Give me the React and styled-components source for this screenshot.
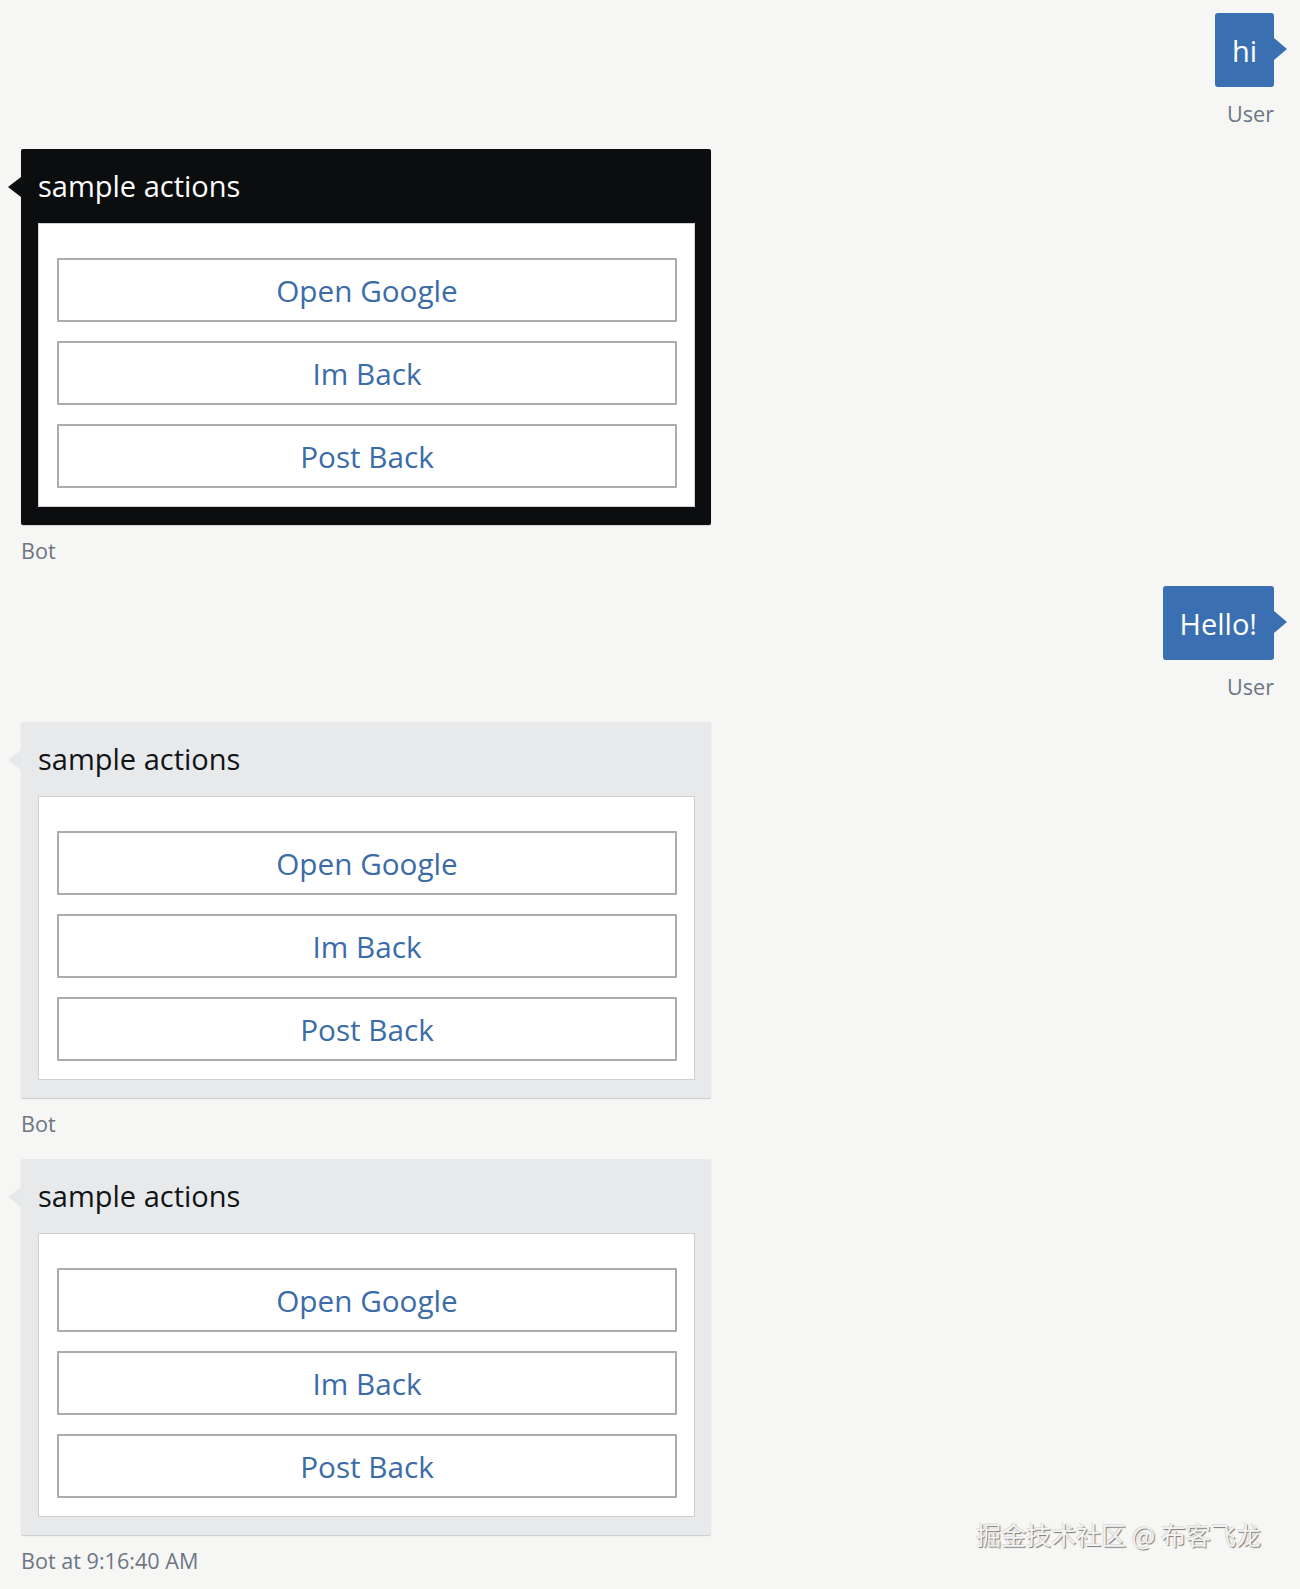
import styled, { createGlobalStyle } from "styled-components";

const GlobalStyle = createGlobalStyle`
  html, body {
    margin: 0;
    padding: 0;
    background: #f6f6f4;
  }
  * {
    box-sizing: border-box;
  }
`;

const Chat = styled.div`
  position: relative;
  min-height: 100vh;
  padding: 13px 26px 17px 21px;
  display: flex;
  flex-direction: column;
  gap: 21px;
  font-family: "Open Sans", "Noto Sans", sans-serif;
`;

const Group = styled.div`
  display: flex;
  flex-direction: column;
  align-items: ${(p) => (p.$from === "user" ? "flex-end" : "flex-start")};
`;

const Bubble = styled.div`
  position: relative;
  height: 74px;
  padding: 0 17px;
  display: flex;
  align-items: center;
  background: #3a70b2;
  color: #fff;
  font-size: 29px;
  border-radius: 3px;

  &::after {
    content: "";
    position: absolute;
    right: -13px;
    top: 25px;
    border-left: 13px solid #3a70b2;
    border-top: 11px solid transparent;
    border-bottom: 11px solid transparent;
  }
`;

const Sender = styled.div`
  margin-top: ${(p) => (p.$from === "user" ? "13px" : "12px")};
  font-size: 21.6px;
  line-height: 28px;
  color: #6d7683;
`;

const Card = styled.div`
  position: relative;
  width: 690px;
  padding: 17px 16px 18px 17px;
  background: ${(p) => (p.$dark ? "#0b0d0e" : "#e8e9eb")};
  border-radius: 2px;
  box-shadow: 0 1px 1px ${(p) => (p.$dark ? "#d6d6d6" : "#c9cbcd")};

  &::before {
    content: "";
    position: absolute;
    left: -13px;
    top: 28px;
    border-right: 13px solid ${(p) => (p.$dark ? "#0b0d0e" : "#e6e8ea")};
    border-top: 10px solid transparent;
    border-bottom: 10px solid transparent;
  }
`;

const Title = styled.div`
  margin-bottom: 17px;
  font-size: 29px;
  line-height: 40px;
  color: ${(p) => (p.$dark ? "#ffffff" : "#111416")};
`;

const Actions = styled.div`
  display: flex;
  flex-direction: column;
  gap: 19px;
  padding: 34px 17px 18px 18px;
  background: #fff;
  border: 1px solid #cfd0d2;
`;

const ActionButton = styled.button`
  height: 64px;
  background: #fff;
  border: 2px solid #acacac;
  border-radius: 1px;
  color: #3b6ca8;
  font-family: "Open Sans", "Noto Sans", sans-serif;
  font-size: 29.7px;
  cursor: pointer;

  &:hover {
    border-color: #3b6ca8;
  }
`;

const Watermark = styled.div`
  position: absolute;
  right: 39px;
  bottom: 40px;
  font-family: "Noto Sans CJK SC", "Open Sans", sans-serif;
  font-size: 25px;
  color: #f3f3f3;
  text-shadow: 1px 1px 1px #7a7a7a, -1px -1px 0 #dedede;
`;

const actions = ["Open Google", "Im Back", "Post Back"];

const HeroCard = ({ dark }) => (
  <Card $dark={dark}>
    <Title $dark={dark}>sample actions</Title>
    <Actions>
      {actions.map((a) => (
        <ActionButton key={a}>{a}</ActionButton>
      ))}
    </Actions>
  </Card>
);

const messages = [
  { from: "user", text: "hi", sender: "User" },
  { from: "bot", dark: true, sender: "Bot" },
  { from: "user", text: "Hello!", sender: "User" },
  { from: "bot", sender: "Bot" },
  { from: "bot", sender: "Bot at 9:16:40 AM" },
];

export default function App() {
  return (
    <>
      <GlobalStyle />
      <Chat>
        {messages.map((m, i) => (
          <Group key={i} $from={m.from}>
            {m.from === "user" ? <Bubble>{m.text}</Bubble> : <HeroCard dark={m.dark} />}
            <Sender $from={m.from}>{m.sender}</Sender>
          </Group>
        ))}
        <Watermark>掘金技术社区 @ 布客飞龙</Watermark>
      </Chat>
    </>
  );
}
